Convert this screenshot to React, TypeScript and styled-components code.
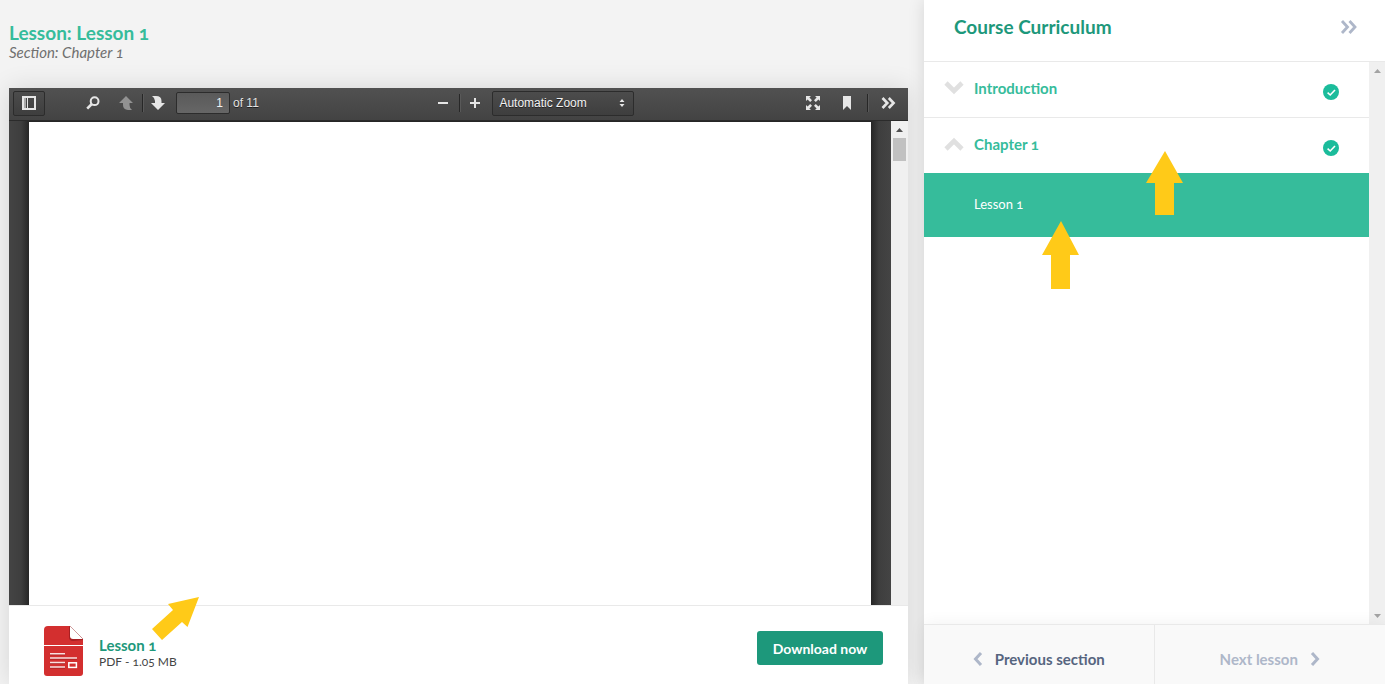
import React, { useState } from "react";
import styled, { createGlobalStyle } from "styled-components";

const GlobalStyle = createGlobalStyle`
  *, *::before, *::after { box-sizing: border-box; }
  body {
    margin: 0;
    background: #f3f3f3;
    font-family: Lato, "Open Sans", sans-serif;
    font-variant-numeric: oldstyle-nums;
    color: #333;
  }
  button, input, select { font: inherit; color: inherit; margin: 0; }
  h1, h2, p { margin: 0; }
`;

const Shell = styled.div`
  display: grid;
  grid-template-columns: minmax(0, 1fr) 461px;
  height: 100vh;
  overflow: hidden;
`;

/* ---------- lesson column ---------- */

const LessonColumn = styled.main`
  display: flex;
  flex-direction: column;
  min-width: 0;
  padding: 23px 16px 0 9px;
`;

const LessonHeader = styled.header`
  height: 65px;
  flex: none;
`;

const LessonTitle = styled.h1`
  font-size: 19px;
  line-height: 20px;
  font-weight: 700;
  color: #36bc9b;
`;

const SectionName = styled.p`
  font-size: 15px;
  line-height: 18px;
  font-style: italic;
  color: #6f6f6f;
`;

const LessonCard = styled.section`
  flex: 1;
  min-height: 0;
  display: flex;
  flex-direction: column;
  background: #fff;
  box-shadow: 0 0 24px rgba(0, 0, 0, 0.12);
`;

const Viewer = styled.div`
  flex: 1;
  min-height: 0;
  display: flex;
  flex-direction: column;
  background: #3c3c3c;
`;

const Toolbar = styled.div`
  flex: none;
  display: flex;
  align-items: center;
  height: 33px;
  padding: 0 4px 2px;
  background: linear-gradient(#515151, #434343);
  border-bottom: 1px solid #2b2b2b;
  font-family: "Liberation Sans", Arial, sans-serif;
  font-variant-numeric: normal;
  font-size: 12px;
  line-height: 14px;
  color: #e4e4e4;
  text-shadow: 0 1px 0 #222;
`;

const ToolGroup = styled.div<{ $push?: boolean }>`
  display: flex;
  align-items: center;
  margin-left: ${(p) => (p.$push ? "auto" : "0")};
  padding-right: ${(p) => (p.$push ? "0" : "6px")};
`;

const ToolButton = styled.button<{ $framed?: boolean; $dim?: boolean; $gap?: number; $narrow?: boolean }>`
  display: flex;
  align-items: center;
  justify-content: center;
  width: ${(p) => (p.$narrow ? 30 : 32)}px;
  height: 25px;
  margin-left: ${(p) => p.$gap ?? 0}px;
  padding: 0;
  border: 1px solid ${(p) => (p.$framed ? "#2c2c2c" : "transparent")};
  border-radius: 2px;
  background: ${(p) => (p.$framed ? "linear-gradient(#4c4c4c, #3e3e3e)" : "none")};
  color: ${(p) => (p.$dim ? "#929292" : "#e6e6e6")};
  cursor: pointer;
`;

const ToolDivider = styled.span<{ $gap?: number }>`
  width: 1px;
  height: 18px;
  margin-left: ${(p) => p.$gap ?? 0}px;
  background: #272727;
  box-shadow: 1px 0 0 #595959;
`;

const PageInput = styled.input`
  width: 54px;
  height: 22px;
  margin-left: 3px;
  padding: 0 6px;
  border: 1px solid #2c2c2c;
  border-radius: 2px;
  background: linear-gradient(#5a5a5a, #666);
  color: #f2f2f2;
  text-align: right;
`;

const PageTotal = styled.label`
  margin-left: 3px;
`;

const ZoomBox = styled.div`
  position: relative;
  width: 142px;
  height: 25px;
  margin-left: 2px;
`;

const ZoomSelect = styled.select`
  appearance: none;
  width: 100%;
  height: 100%;
  padding: 0 24px 0 6px;
  border: 1px solid #2c2c2c;
  border-radius: 2px;
  background: linear-gradient(#4c4c4c, #3e3e3e);
  color: #f2f2f2;
  text-shadow: inherit;
`;

const ZoomMark = styled.svg`
  position: absolute;
  right: 9px;
  top: 8px;
  pointer-events: none;
`;

const Canvas = styled.div`
  flex: 1;
  min-height: 0;
  display: flex;
`;

const PageArea = styled.div`
  flex: 1;
  min-width: 0;
  display: flex;
  padding: 1px 20px 0;
  background: linear-gradient(90deg, #444, #3e3e3e 12px, #262626 20px, #262626 calc(100% - 20px), #3e3e3e calc(100% - 12px), #444);
`;

const Sheet = styled.div`
  flex: 1;
  background: #fff;
`;

const ScrollTrack = styled.div<{ $width: number }>`
  flex: none;
  display: flex;
  flex-direction: column;
  align-items: center;
  width: ${(p) => p.$width}px;
  padding: 7px 0 6px;
  background: #f0f0f0;
`;

const ScrollThumb = styled.div`
  width: 13px;
  height: 23px;
  margin-top: 6px;
  background: #c1c1c1;
`;

const ScrollSpacer = styled.div`
  flex: 1;
`;

const FileBar = styled.footer`
  position: relative;
  flex: none;
  display: flex;
  align-items: center;
  height: 79px;
  padding: 12px 25px 0 35px;
  border-top: 1px solid #e9e9e9;
`;

const FileInfo = styled.div`
  margin-left: 15px;
  padding-top: 4px;
`;

const FileName = styled.p`
  font-size: 15px;
  line-height: 17px;
  font-weight: 700;
  color: #1d987b;
`;

const FileMeta = styled.p`
  font-size: 12px;
  line-height: 16px;
  color: #444;
`;

const DownloadButton = styled.button`
  width: 126px;
  height: 34px;
  margin: 0 0 6px auto;
  padding: 0;
  border: 0;
  border-radius: 3px;
  background: #1d987b;
  color: #fff;
  font-size: 14px;
  font-weight: 700;
  cursor: pointer;
`;

/* ---------- curriculum column ---------- */

const Sidebar = styled.aside`
  position: relative;
  display: flex;
  flex-direction: column;
  min-height: 0;
  background: #fff;
  box-shadow: 0 0 16px rgba(0, 0, 0, 0.12);
`;

const SidebarHeader = styled.header`
  flex: none;
  display: flex;
  align-items: center;
  justify-content: space-between;
  height: 62px;
  padding: 0 28px 7px 30px;
  border-bottom: 1px solid #e9e9e9;
`;

const SidebarTitle = styled.h2`
  font-size: 19px;
  line-height: 24px;
  font-weight: 700;
  color: #1d987b;
`;

const IconButton = styled.button`
  display: flex;
  padding: 0;
  border: 0;
  background: none;
  color: #aeb7c9;
  cursor: pointer;
`;

const SidebarBody = styled.div`
  flex: 1;
  min-height: 0;
  display: flex;
`;

const SectionList = styled.div`
  flex: 1;
  min-width: 0;
`;

const Anchor = styled.div`
  position: relative;
`;

const SectionRow = styled.button<{ $line?: boolean }>`
  display: flex;
  align-items: center;
  width: 100%;
  height: ${(p) => (p.$line ? 56 : 55)}px;
  padding: 0 30px 3px 20px;
  border: 0;
  border-bottom: ${(p) => (p.$line ? "1px solid #e9e9e9" : "0")};
  background: #fff;
  color: #36bc9b;
  font-size: 15px;
  line-height: 20px;
  font-weight: 700;
  text-align: left;
  cursor: pointer;
`;

const SectionLabel = styled.span`
  flex: 1;
  margin-left: 10px;
`;

const DoneBadge = styled.svg`
  flex: none;
  margin-top: 7px;
`;

const LessonLink = styled.a`
  display: flex;
  align-items: center;
  height: 64px;
  padding: 0 0 2px 50px;
  background: #36bc9b;
  color: #fff;
  font-size: 13px;
  text-decoration: none;
`;

const SidebarFooter = styled.nav`
  flex: none;
  display: grid;
  grid-template-columns: 1fr 1fr;
  height: 60px;
  border-top: 1px solid #e9e9e9;
  background: #f9f9f9;
  box-shadow: 0 0 16px rgba(0, 0, 0, 0.06);
`;

const NavButton = styled.button<{ $muted?: boolean }>`
  display: flex;
  align-items: center;
  justify-content: center;
  gap: 12px;
  padding: 8px 0 0;
  border: 0;
  border-right: ${(p) => (p.$muted ? "0" : "1px solid #e9e9e9")};
  background: none;
  color: ${(p) => (p.$muted ? "#aeb7c9" : "#56657f")};
  font-size: 15px;
  line-height: 20px;
  font-weight: 700;
  cursor: pointer;
`;

/* ---------- callout arrows ---------- */

const Callout = styled.svg<{ $left: number; $top: number }>`
  position: absolute;
  z-index: 2;
  left: ${(p) => p.$left}px;
  top: ${(p) => p.$top}px;
  fill: #ffca18;
  pointer-events: none;
`;

const UpArrow = ({ left, top, height }: { left: number; top: number; height: number }) => (
  <Callout $left={left} $top={top} width="38" height={height} viewBox={`0 0 38 ${height}`}>
    <path d={`M19 0 37 ${height / 2}H28V${height}H9V${height / 2}H0Z`} />
  </Callout>
);

const Chevron = ({ dir }: { dir: "up" | "down" }) => (
  <svg width="20" height="14" viewBox="0 0 20 14" fill="none" stroke="#e0e0e0" strokeWidth="4.6">
    <path d={dir === "down" ? "M2 2 10 10 18 2" : "M2 12 10 4 18 12"} />
  </svg>
);

const Done = () => (
  <DoneBadge width="16" height="16" viewBox="0 0 16 16" role="img" aria-label="Completed">
    <circle cx="8" cy="8" r="8" fill="#1bbc9b" />
    <path d="M4.6 8.6 7.2 11 12 6" fill="none" stroke="#fff" strokeWidth="1.6" />
  </DoneBadge>
);

const NavChevron = ({ dir }: { dir: "left" | "right" }) => (
  <svg width="10" height="14" viewBox="0 0 10 14" fill="none" stroke="#aeb7c9" strokeWidth="3">
    <path d={dir === "left" ? "M8 1 2.5 7 8 13" : "M2 1 7.5 7 2 13"} />
  </svg>
);

const PdfIcon = () => (
  <svg width="40" height="51" viewBox="0 0 40 51">
    <path d="M4 0H26L39 13V47Q39 50 36 50H3Q0 50 0 47V4Q0 0 4 0Z" fill="#d32f2f" />
    <path d="M25 0V11Q25 15 29 15L39 14V13Z" fill="#a71f22" />
    <path d="M26 0 39 13H29Q26 13 26 10Z" fill="#fff" />
    <path d="M26 0 39 13" stroke="#b98080" strokeWidth=".6" />
    <path d="M0 19.5H39" stroke="#fff" strokeWidth="1.2" />
    <path d="M6 28.5H21M6 32.8H33M6 37.2H21M6 41.8H21" stroke="#9f2022" strokeWidth="1.6" />
    <path d="M6 27.8H21M6 32H33M6 36.5H21M6 41H21" stroke="#fbe0e0" strokeWidth="1.4" />
    <rect x="24.8" y="36.8" width="7.6" height="4.6" fill="none" stroke="#fff" strokeWidth="1.5" />
  </svg>
);

export default function App() {
  const [page, setPage] = useState("1");

  return (
    <>
      <GlobalStyle />
      <Shell>
        <LessonColumn>
          <LessonHeader>
            <LessonTitle>Lesson: Lesson 1</LessonTitle>
            <SectionName>Section: Chapter 1</SectionName>
          </LessonHeader>
          <LessonCard>
            <Viewer>
              <Toolbar>
                <ToolGroup>
                  <ToolButton $framed aria-label="Toggle sidebar">
                    <svg width="14" height="14" viewBox="0 0 14 14">
                      <rect x="1" y="1" width="12" height="12" fill="none" stroke="currentColor" strokeWidth="2" />
                      <path d="M2 2H4V12H2Z" fill="#aaa" />
                      <path d="M5.5 2V12" stroke="currentColor" strokeWidth="1" />
                    </svg>
                  </ToolButton>
                  <ToolButton $gap={32} aria-label="Find in document">
                    <svg width="14" height="14" viewBox="0 0 14 14" fill="none" stroke="currentColor">
                      <circle cx="8.6" cy="5.2" r="3.9" strokeWidth="2" />
                      <path d="M5.8 8 1.2 12.6" strokeWidth="2.6" />
                    </svg>
                  </ToolButton>
                  <ToolButton $dim $gap={1} aria-label="Previous page">
                    <svg width="14" height="14" viewBox="0 0 14 14" fill="currentColor">
                      <path d="M7 0 14 7H10.500V9Q10.500 12 13 14H9Q4 13.500 4 9V7H0Z" />
                    </svg>
                  </ToolButton>
                  <ToolDivider />
                  <ToolButton $narrow aria-label="Next page">
                    <svg width="14" height="14" viewBox="0 0 14 14" fill="currentColor">
                      <path d="M7 14 14 7H10.500V5Q10.500 0 5 0H1Q4 2 4 5V7H0Z" />
                    </svg>
                  </ToolButton>
                  <PageInput
                    id="page-number"
                    value={page}
                    onChange={(e) => setPage(e.target.value)}
                    aria-label="Page"
                  />
                  <PageTotal htmlFor="page-number">of 11</PageTotal>
                </ToolGroup>

                <ToolGroup $push>
                  <ToolButton aria-label="Zoom out">
                    <svg width="12" height="12" viewBox="0 0 12 12" fill="currentColor">
                      <path d="M1 5H11V7H1Z" />
                    </svg>
                  </ToolButton>
                  <ToolDivider />
                  <ToolButton $narrow aria-label="Zoom in">
                    <svg width="12" height="12" viewBox="0 0 12 12" fill="currentColor">
                      <path d="M1 5H5V1H7V5H11V7H7V11H5V7H1Z" />
                    </svg>
                  </ToolButton>
                  <ZoomBox>
                    <ZoomSelect aria-label="Zoom">
                      <option>Automatic Zoom</option>
                    </ZoomSelect>
                    <ZoomMark width="6" height="8" viewBox="0 0 6 8" fill="#e6e6e6">
                      <path d="M3 0 5.500 3H.5ZM3 8 .5 5H5.500Z" />
                    </ZoomMark>
                  </ZoomBox>
                </ToolGroup>

                <ToolGroup $push>
                  <ToolButton aria-label="Presentation mode">
                    <svg width="14" height="14" viewBox="0 0 14 14" fill="currentColor">
                      <path d="M0 0H5L3.4 1.6 6 4.2 4.2 6 1.6 3.4 0 5ZM14 0V5L12.4 3.4 9.8 6 8 4.2 10.6 1.6 9 0ZM0 14V9L1.6 10.6 4.2 8 6 9.8 3.4 12.4 5 14ZM14 14H9L10.6 12.4 8 9.8 9.8 8 12.4 10.6 14 9Z" />
                    </svg>
                  </ToolButton>
                  <ToolButton $gap={2} aria-label="Current view">
                    <svg width="8" height="14" viewBox="0 0 8 14" fill="currentColor">
                      <path d="M0 0H8V14L4 10 0 14Z" />
                    </svg>
                  </ToolButton>
                  <ToolDivider $gap={4} />
                  <ToolButton $gap={4} aria-label="Tools">
                    <svg width="15" height="12" viewBox="0 0 15 12" fill="none" stroke="currentColor" strokeWidth="2.6">
                      <path d="M1.500 1 6.300 6 1.500 11M7.800 1 12.600 6 7.800 11" />
                    </svg>
                  </ToolButton>
                </ToolGroup>
              </Toolbar>
              <Canvas>
                <PageArea>
                  <Sheet />
                </PageArea>
                <ScrollTrack $width={17}>
                  <svg width="7" height="4" viewBox="0 0 7 4" fill="#505050">
                    <path d="M3.500 0 7 4H0Z" />
                  </svg>
                  <ScrollThumb />
                </ScrollTrack>
              </Canvas>
            </Viewer>
            <FileBar>
              <PdfIcon />
              <FileInfo>
                <FileName>Lesson 1</FileName>
                <FileMeta>PDF - 1.05 MB</FileMeta>
              </FileInfo>
              <DownloadButton>Download now</DownloadButton>
              <Callout $left={143} $top={-9} width="48" height="44" viewBox="0 0 48 44">
                <path d="M47 0 35.500 30 30 25 10 43 0 32 21 13 16 7Z" />
              </Callout>
            </FileBar>
          </LessonCard>
        </LessonColumn>

        <Sidebar>
          <SidebarHeader>
            <SidebarTitle>Course Curriculum</SidebarTitle>
            <IconButton aria-label="Collapse curriculum">
              <svg width="17" height="14" viewBox="0 0 17 14" fill="none" stroke="currentColor" strokeWidth="2.8">
                <path d="M2 1 7.500 7 2 13M9.500 1 15 7 9.500 13" />
              </svg>
            </IconButton>
          </SidebarHeader>
          <SidebarBody>
            <SectionList>
              <SectionRow $line aria-expanded={false}>
                <Chevron dir="down" />
                <SectionLabel>Introduction</SectionLabel>
                <Done />
              </SectionRow>
              <Anchor>
                <SectionRow aria-expanded>
                  <Chevron dir="up" />
                  <SectionLabel>Chapter 1</SectionLabel>
                  <Done />
                </SectionRow>
                <UpArrow left={222} top={33} height={64} />
              </Anchor>
              <Anchor>
                <LessonLink href="#lesson-1">Lesson 1</LessonLink>
                <UpArrow left={118} top={48} height={68} />
              </Anchor>
            </SectionList>
            <ScrollTrack $width={16}>
              <svg width="7" height="4" viewBox="0 0 7 4" fill="#a3a3a3">
                <path d="M3.500 0 7 4H0Z" />
              </svg>
              <ScrollSpacer />
              <svg width="7" height="4" viewBox="0 0 7 4" fill="#a3a3a3">
                <path d="M3.500 4 0 0H7Z" />
              </svg>
            </ScrollTrack>
          </SidebarBody>
          <SidebarFooter>
            <NavButton>
              <NavChevron dir="left" />
              Previous section
            </NavButton>
            <NavButton $muted>
              Next lesson
              <NavChevron dir="right" />
            </NavButton>
          </SidebarFooter>
        </Sidebar>
      </Shell>
    </>
  );
}
